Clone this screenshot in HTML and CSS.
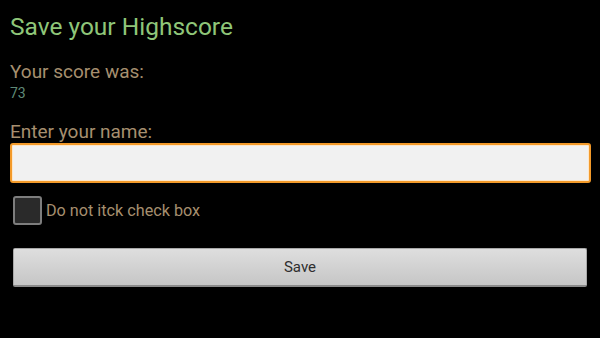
FILE: index.html
```html
<!DOCTYPE html>
<html lang="en">
<head>
    <meta charset="UTF-8">
    <meta name="viewport" content="width=device-width, initial-scale=1.0">
    <title>Save your Highscore</title>
    <link rel="stylesheet" href="styles.css">
</head>
<body>
    <div class="highscore-form">
        <h1>Save your Highscore</h1>
        <div class="label">Your score was:</div>
        <div class="score">73</div>
        <div class="label name-label">Enter your name:</div>
        <input type="text" class="name-input">
        <label class="check-row">
            <span class="check-box"></span>
            <span class="check-text">Do not itck check box</span>
        </label>
        <button class="btn">Save</button>
    </div>
</body>
</html>
```

FILE: styles.css
```css
:root {
    --title-color: #8fc679;
    --label-color: #a68f6f;
    --score-color: #5f8a77;
    --bg-color: #000000;
    --orange: #f39a2a;
}

* {
    box-sizing: border-box;
    margin: 0;
    padding: 0;
}

body {
    font-family: Roboto, 'Noto Sans', Arial, sans-serif;
    background-color: var(--bg-color);
    width: 600px;
    height: 338px;
    overflow: hidden;
}

.highscore-form {
    display: flex;
    flex-direction: column;
    padding: 13px 10px 0 10px;
}

h1 {
    color: var(--title-color);
    font-size: 24.5px;
    font-weight: 400;
    line-height: 28px;
}

.label {
    color: var(--label-color);
    font-size: 19px;
    line-height: 22px;
    margin-top: 20px;
}

.score {
    color: var(--score-color);
    font-size: 14px;
    line-height: 16px;
    margin-top: 2px;
}

.name-label {
    margin-top: 20px;
}

.name-input {
    display: block;
    width: 581px;
    height: 40px;
    background: #f1f1f1;
    border: 2px solid var(--orange);
    border-radius: 3px;
    box-shadow: inset 0 0 0 1px #fde6c8;
    outline: none;
}

.check-row {
    display: flex;
    align-items: center;
    gap: 4px;
    margin-top: 13px;
    margin-left: 3px;
}

.check-box {
    width: 29px;
    height: 29px;
    background: #2a2a2a;
    border: 2px solid #7d7d7d;
    border-radius: 3px;
}

.check-text {
    color: var(--label-color);
    font-size: 16.2px;
}

.btn {
    display: block;
    width: 574px;
    height: 39px;
    margin: 23px 0 0 3px;
    font-family: Roboto, 'Noto Sans', Arial, sans-serif;
    font-size: 15px;
    color: #2e2e2e;
    background: linear-gradient(to bottom, #dedede, #c6c6c6);
    border: 1px solid #a8a8a8;
    border-bottom: 2px solid #8a8a8a;
    border-radius: 2px;
}
```
